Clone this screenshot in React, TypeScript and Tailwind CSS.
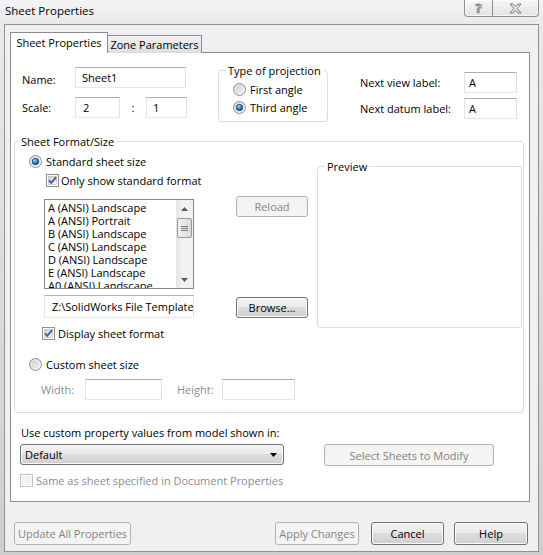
import clsx from "clsx";

const btnOn =
  "border-[#707070] bg-[linear-gradient(180deg,#f2f2f2_0%,#ebebeb_50%,#dddddd_50%,#cfcfcf_100%)] text-black shadow-[inset_0_0_0_1px_#fbfbfb]";
const btnOff = "border-[#adb2b5] bg-[#f4f4f4] text-[#838383]";

function Button({ label, disabled, className }: { label: string; disabled?: boolean; className?: string }) {
  return (
    <div
      className={clsx(
        "flex shrink-0 items-center justify-center rounded-[3px] border leading-none",
        disabled ? btnOff : btnOn,
        className
      )}
    >
      {label}
    </div>
  );
}

function TextBox({ value = "", className }: { value?: string; className?: string }) {
  return (
    <div
      className={clsx(
        "flex shrink-0 items-center overflow-hidden whitespace-nowrap border border-t-[#abadb3] border-l-[#e2e3ea] border-r-[#dbdfe6] border-b-[#e3e9ef] bg-white",
        className
      )}
    >
      {value}
    </div>
  );
}

function Radio({ checked = false }: { checked?: boolean }) {
  return (
    <svg width="13" height="13" viewBox="0 0 13 13" className="block shrink-0">
      <defs>
        <linearGradient id="radio-face" x1="0" y1="0" x2="1" y2="1">
          <stop offset="0" stopColor="#c4c6c8" />
          <stop offset="1" stopColor="#fafafa" />
        </linearGradient>
        <radialGradient id="radio-dot" cx="0.4" cy="0.35" r="0.7">
          <stop offset="0" stopColor="#a6e4ff" />
          <stop offset="0.45" stopColor="#2f8bd0" />
          <stop offset="1" stopColor="#153d66" />
        </radialGradient>
      </defs>
      <circle cx="6.5" cy="6.5" r="6" fill="url(#radio-face)" stroke="#8e8f8f" />
      <circle cx="6.5" cy="6.5" r="4.6" fill="none" stroke="#f2f2f2" strokeWidth="0.8" />
      {checked && <circle cx="6.5" cy="6.5" r="3.3" fill="url(#radio-dot)" stroke="#1b3c5e" strokeWidth="0.6" />}
    </svg>
  );
}

function Check({ checked = false, disabled = false }: { checked?: boolean; disabled?: boolean }) {
  return (
    <svg width="13" height="13" viewBox="0 0 13 13" className="block shrink-0">
      <defs>
        <linearGradient id="check-face" x1="0" y1="0" x2="1" y2="1">
          <stop offset="0" stopColor="#c9cdd3" />
          <stop offset="1" stopColor="#f7f7f7" />
        </linearGradient>
      </defs>
      <rect x="0.5" y="0.5" width="12" height="12" fill="#fff" stroke={disabled ? "#c2c2c2" : "#8e8f8f"} />
      <rect
        x="2.5"
        y="2.5"
        width="8"
        height="8"
        fill={disabled ? "#f4f4f4" : "url(#check-face)"}
        stroke={disabled ? "#e2e2e2" : "#b3b7bd"}
        strokeWidth="0.6"
      />
      {checked && <path d="M3 6.4 L5.3 8.9 L10.1 3.1" fill="none" stroke="#4b5d98" strokeWidth="1.9" />}
    </svg>
  );
}

const sheetSizes = [
  "A (ANSI) Landscape",
  "A (ANSI) Portrait",
  "B (ANSI) Landscape",
  "C (ANSI) Landscape",
  "D (ANSI) Landscape",
  "E (ANSI) Landscape",
  "A0 (ANSI) Landscape",
];

function ScrollBar() {
  return (
    <div className="flex w-[17px] shrink-0 flex-col bg-[linear-gradient(90deg,#e4e4e4,#f4f4f4_45%,#f0f0f0)]">
      <div className="flex h-[17px] items-center justify-center">
        <svg width="7" height="4" viewBox="0 0 7 4">
          <path d="M3.5 0L7 4H0Z" fill="#5a5a5a" />
        </svg>
      </div>
      <div className="mx-[1px] mt-[1px] flex h-[20px] flex-col items-center justify-center gap-[1px] rounded-[2px] border border-[#979797] bg-[linear-gradient(90deg,#f3f3f3,#d8d8d8)]">
        <div className="h-px w-[7px] bg-[#7a7a7a]" />
        <div className="h-px w-[7px] bg-[#7a7a7a]" />
        <div className="h-px w-[7px] bg-[#7a7a7a]" />
      </div>
      <div className="mt-auto flex h-[17px] items-center justify-center">
        <svg width="7" height="4" viewBox="0 0 7 4">
          <path d="M0 0H7L3.5 4Z" fill="#5a5a5a" />
        </svg>
      </div>
    </div>
  );
}

export default function App() {
  return (
    <div className="h-[555px] w-[543px] overflow-hidden bg-[linear-gradient(180deg,#f3f4f5_0px,#e8e9ea_26px,#cdcecf_100%)] font-['Open_Sans',sans-serif] text-[11px] leading-[15px] text-black">
      {/* caption bar */}
      <div className="flex h-[24px]">
        <div className="pl-[5px] pt-[3px] text-[11.5px] leading-[16px]">Sheet Properties</div>
        <div className="ml-auto mr-[4px] flex h-[17px] rounded-b-[4px] border border-t-0 border-[#8a8e93] bg-[linear-gradient(180deg,#f7f7f7,#e1e2e3)] shadow-[inset_0_0_0_1px_rgba(255,255,255,0.7)]">
          <div className="flex w-[28px] items-center justify-center border-r border-[#8a8e93]">
            <span className="text-[13px] font-bold leading-[16px] text-[#efefef] [-webkit-text-stroke:0.8px_#6c6c6c]">?</span>
          </div>
          <div className="flex w-[45px] items-center justify-center">
            <svg width="13" height="11" viewBox="0 0 13 11">
              <polygon
                points="1,1 4,1 6.5,3.8 9,1 12,1 8.2,5.5 12,10 9,10 6.5,7.2 4,10 1,10 4.8,5.5"
                fill="#e8e8e8"
                stroke="#6f6f6f"
                strokeWidth="0.9"
                strokeLinejoin="round"
              />
            </svg>
          </div>
        </div>
      </div>

      {/* client area */}
      <div className="ml-[4px] h-[528px] w-[535px] border border-[#8e9297] bg-[#f0f0f0]">
        {/* tabs */}
        <div className="ml-[5px] mt-[7px] flex h-[21px] items-end">
          <div className="relative z-10 flex h-[21px] w-[98px] justify-center border border-b-0 border-[#898c95] bg-white pt-[2px]">
            Sheet Properties
          </div>
          <div className="-ml-px flex h-[18px] w-[95px] items-center justify-center border border-b-0 border-[#898c95] bg-[linear-gradient(180deg,#f2f2f2,#dddddd)]">
            Zone Parameters
          </div>
        </div>

        {/* tab page */}
        <div className="-mt-px ml-[5px] h-[450px] w-[520px] border border-[#898c95] bg-white">
          <div className="flex items-start pl-[11px]">
            {/* name / scale */}
            <div className="pt-[14px]">
              <div className="flex h-[21px]">
                <div className="w-[53px] pt-[5px]">Name:</div>
                <TextBox value="Sheet1" className="h-[21px] w-[111px] pl-[6px]" />
              </div>
              <div className="mt-[9px] flex h-[21px] items-center">
                <div className="w-[53px]">Scale:</div>
                <TextBox value="2" className="h-[21px] w-[45px] pl-[7px]" />
                <div className="w-[26px] text-center">:</div>
                <TextBox value="1" className="h-[21px] w-[41px] pl-[6px]" />
              </div>
            </div>

            {/* projection */}
            <fieldset className="ml-[31px] mt-[10px] h-[59px] w-[110px] rounded-[3px] border border-[#d5dfe5]">
              <legend className="ml-[7px] px-[2px] leading-[15px]">Type of projection</legend>
              <div className="pl-[14px] pt-[2px]">
                <div className="flex h-[18px] items-center">
                  <Radio />
                  <span className="ml-[4px]">First angle</span>
                </div>
                <div className="flex h-[18px] items-center">
                  <Radio checked />
                  <span className="ml-[4px]">Third angle</span>
                </div>
              </div>
            </fieldset>

            {/* labels */}
            <div className="ml-[32px] pt-[19px]">
              <div className="flex h-[21px] items-center">
                <div className="w-[104px]">Next view label:</div>
                <TextBox value="A" className="h-[21px] w-[53px] pl-[4px]" />
              </div>
              <div className="mt-[5px] flex h-[21px] items-center">
                <div className="w-[104px]">Next datum label:</div>
                <TextBox value="A" className="h-[21px] w-[53px] pl-[4px]" />
              </div>
            </div>
          </div>

          {/* sheet format / size */}
          <fieldset className="ml-[3px] mt-[12px] h-[279px] w-[510px] rounded-[3px] border border-[#d5dfe5]">
            <legend className="ml-[4px] px-[2px] leading-[15px]">Sheet Format/Size</legend>
            <div className="flex items-start">
              <div className="w-[302px]">
                <div className="mt-[3px] flex h-[18px] items-center pl-[14px]">
                  <Radio checked />
                  <span className="ml-[4px]">Standard sheet size</span>
                </div>
                <div className="mt-[1px] flex h-[18px] items-center pl-[31px]">
                  <Check checked />
                  <span className="ml-[2px]">Only show standard format</span>
                </div>

                <div className="mt-[7px] flex items-start">
                  <div className="pl-[29px]">
                    <div className="mt-[3px] flex h-[90px] w-[150px] border border-[#828790] bg-white">
                      <div className="flex-1 overflow-hidden pl-[3px] pt-[1px] leading-[13px]">
                        {sheetSizes.map((s) => (
                          <div key={s} className="whitespace-nowrap">
                            {s}
                          </div>
                        ))}
                      </div>
                      <ScrollBar />
                    </div>
                    <TextBox value="Z:\SolidWorks File Template" className="mt-[6px] h-[23px] w-[150px] pl-[7px]" />
                  </div>
                  <div className="ml-[42px]">
                    <Button label="Reload" disabled className="h-[21px] w-[72px]" />
                    <Button label="Browse..." className="mt-[80px] h-[21px] w-[72px]" />
                  </div>
                </div>

                <div className="mt-[6px] flex h-[18px] items-center pl-[27px]">
                  <Check checked />
                  <span className="ml-[3px]">Display sheet format</span>
                </div>
                <div className="mt-[13px] flex h-[18px] items-center pl-[14px]">
                  <Radio />
                  <span className="ml-[4px]">Custom sheet size</span>
                </div>
                <div className="mt-[6px] flex h-[21px] items-center pl-[26px] text-[#8d8d8d]">
                  <div className="w-[44px]">Width:</div>
                  <TextBox className="h-[21px] w-[77px]" />
                  <div className="ml-[15px] w-[45px]">Height:</div>
                  <TextBox className="h-[21px] w-[73px]" />
                </div>
              </div>

              <fieldset className="mt-[10px] h-[169px] w-[205px] rounded-[3px] border border-[#d5dfe5]">
                <legend className="ml-[7px] px-[2px] leading-[15px]">Preview</legend>
              </fieldset>
            </div>
          </fieldset>

          <div className="mt-[12px] pl-[10px]">Use custom property values from model shown in:</div>
          <div className="mt-[4px] flex pl-[9px]">
            <div className={clsx("flex h-[21px] w-[264px] items-center rounded-[3px] border pl-[4px] pr-[6px]", btnOn)}>
              <span>Default</span>
              <svg className="ml-auto" width="7" height="4" viewBox="0 0 7 4">
                <path d="M0 0H7L3.5 4Z" fill="#000" />
              </svg>
            </div>
            <Button label="Select Sheets to Modify" disabled className="ml-[40px] h-[22px] w-[170px]" />
          </div>
          <div className="mt-[5px] flex h-[18px] items-center pl-[9px]">
            <Check disabled />
            <span className="ml-[3px] text-[#8d8d8d]">Same as sheet specified in Document Properties</span>
          </div>
        </div>

        {/* dialog buttons */}
        <div className="mt-[20px] flex pl-[9px]">
          <Button label="Update All Properties" disabled className="h-[23px] w-[117px]" />
          <Button label="Apply Changes" disabled className="ml-[144px] h-[23px] w-[84px]" />
          <Button label="Cancel" className="ml-[12px] h-[23px] w-[73px]" />
          <Button label="Help" className="ml-[10px] h-[23px] w-[74px]" />
        </div>
      </div>
    </div>
  );
}
